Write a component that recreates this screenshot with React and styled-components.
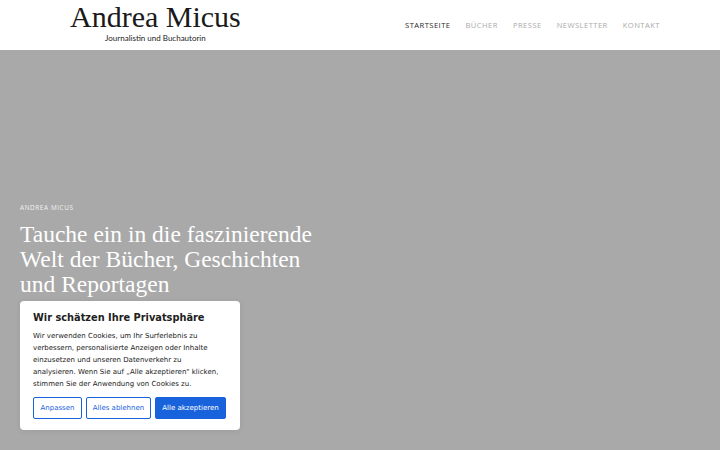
import React from 'react';
import styled, { createGlobalStyle } from 'styled-components';

const GlobalStyle = createGlobalStyle`
  html, body { margin: 0; padding: 0; height: 100%; }
  body { background: #a9a9a9; font-family: 'Open Sans', sans-serif; overflow: hidden; }
  #root { height: 100%; }
`;

const Page = styled.div`
  height: 450px;
  display: flex;
  flex-direction: column;
  position: relative;
`;

const Header = styled.header`
  height: 50px;
  background: #fff;
  display: flex;
  align-items: center;
  justify-content: space-between;
  padding: 0 60px 0 70px;
  box-shadow: 0 1px 2px rgba(0, 0, 0, 0.08);
  flex-shrink: 0;
`;

const Brand = styled.a`
  display: flex;
  flex-direction: column;
  align-items: center;
  text-decoration: none;
  margin-top: -6px;
`;

const BrandName = styled.span`
  font-family: 'Liberation Serif', serif;
  font-size: 30px;
  line-height: 32px;
  color: #1a1a1a;
`;

const BrandTag = styled.span`
  font-family: 'Lato', sans-serif;
  font-size: 8px;
  line-height: 10px;
  color: #222;
`;

const Nav = styled.nav`
  display: flex;
  gap: 15px;
`;

const NavLink = styled.a`
  font-family: 'Open Sans', sans-serif;
  font-size: 7.6px;
  letter-spacing: 0.45px;
  text-transform: uppercase;
  color: ${(p) => (p.$active ? '#2a2a2a' : '#aaa')};
  text-decoration: none;
`;

const Hero = styled.section`
  flex: 1;
  background: #a9a9a9;
  padding: 153px 20px 0;
  display: flex;
  flex-direction: column;
`;

const Kicker = styled.span`
  font-family: 'Open Sans', sans-serif;
  font-size: 6.4px;
  letter-spacing: 0.6px;
  color: #f2f2f2;
  text-transform: uppercase;
`;

const Headline = styled.h1`
  margin: 10px 0 0;
  font-family: 'Liberation Serif', serif;
  font-weight: normal;
  font-size: 23.5px;
  line-height: 25px;
  color: #fff;
  width: 300px;
`;

const Consent = styled.div`
  position: absolute;
  left: 20px;
  top: 301px;
  width: 220px;
  box-sizing: border-box;
  padding: 10px 13px 11px;
  background: #fff;
  border-radius: 4px;
  font-family: 'DejaVu Sans', sans-serif;
  box-shadow: 0 1px 6px rgba(0, 0, 0, 0.08);
`;

const ConsentTitle = styled.h2`
  margin: 0 0 5px;
  font-size: 9.8px;
  line-height: 14px;
  font-weight: bold;
  color: #212121;
`;

const ConsentText = styled.p`
  margin: 0 0 7px;
  max-width: 188px;
  font-size: 7px;
  line-height: 12px;
  color: #212121;
`;

const Buttons = styled.div`
  display: flex;
  gap: 4px;
`;

const Button = styled.button`
  height: 22px;
  width: ${(p) => p.$w}px;
  flex-shrink: 0;
  padding: 0;
  white-space: nowrap;
  font-family: 'DejaVu Sans', sans-serif;
  font-size: 7px;
  border-radius: 2px;
  border: 1.5px solid #1863dc;
  background: ${(p) => (p.$primary ? '#1863dc' : '#fff')};
  color: ${(p) => (p.$primary ? '#fff' : '#1863dc')};
  cursor: pointer;
`;

export default function App() {
  return (
    <Page>
      <GlobalStyle />
      <Header>
        <Brand href="#">
          <BrandName>Andrea Micus</BrandName>
          <BrandTag>Journalistin und Buchautorin</BrandTag>
        </Brand>
        <Nav>
          <NavLink href="#" $active>Startseite</NavLink>
          <NavLink href="#">Bücher</NavLink>
          <NavLink href="#">Presse</NavLink>
          <NavLink href="#">Newsletter</NavLink>
          <NavLink href="#">Kontakt</NavLink>
        </Nav>
      </Header>
      <Hero>
        <Kicker>Andrea Micus</Kicker>
        <Headline>Tauche ein in die faszinierende Welt der Bücher, Geschichten und Reportagen</Headline>
      </Hero>
      <Consent>
        <ConsentTitle>Wir schätzen Ihre Privatsphäre</ConsentTitle>
        <ConsentText>
          Wir verwenden Cookies, um Ihr Surferlebnis zu verbessern, personalisierte Anzeigen oder Inhalte
          einzusetzen und unseren Datenverkehr zu analysieren. Wenn Sie auf „Alle akzeptieren" klicken,
          stimmen Sie der Anwendung von Cookies zu.
        </ConsentText>
        <Buttons>
          <Button $w={49}>Anpassen</Button>
          <Button $w={65}>Alles ablehnen</Button>
          <Button $primary $w={71}>Alle akzeptieren</Button>
        </Buttons>
      </Consent>
    </Page>
  );
}
